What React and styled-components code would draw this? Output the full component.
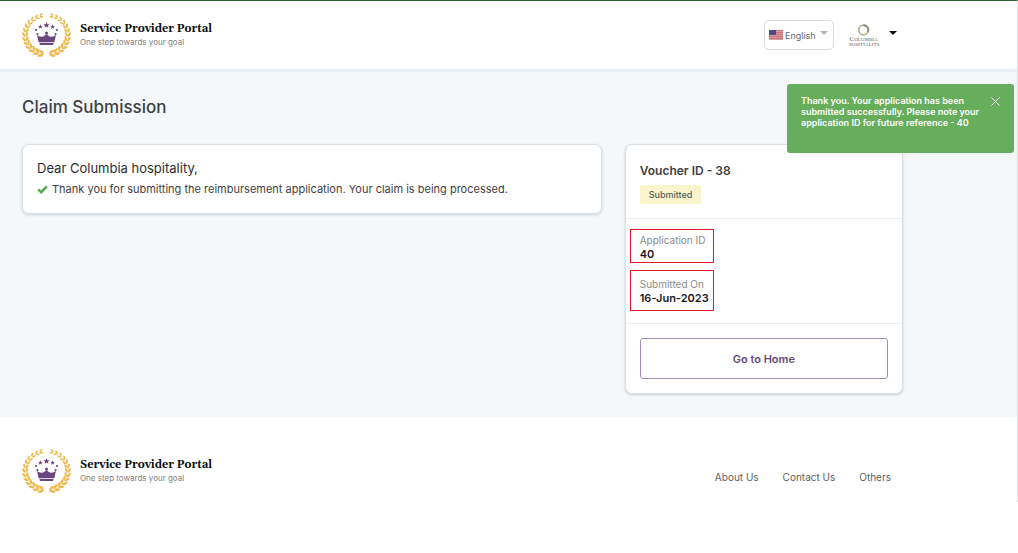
import React, { useState } from "react";
import styled, { createGlobalStyle } from "styled-components";

const GlobalStyle = createGlobalStyle`
  * {
    box-sizing: border-box;
  }
  body {
    margin: 0;
    background: #fff;
    color: #3f4144;
    font-family: Inter, sans-serif;
  }
  h1, h2, p, dl, dd {
    margin: 0;
  }
  button, select {
    font-family: inherit;
    cursor: pointer;
  }
`;

const Page = styled.div`
  border-top: 1px solid #2a6230;
  border-right: 1px solid #dfe2e5;
`;

const Container = styled.div`
  max-width: 903px;
  padding-left: 22px;
`;

const Header = styled.header`
  background: #fff;
  padding: 11px 0;
`;

const HeaderRow = styled(Container)`
  display: flex;
  align-items: center;
  justify-content: space-between;
`;

const HeaderTools = styled.div`
  display: flex;
  align-items: center;
  gap: 15px;
  padding-right: 6px;
`;

const BrandLink = styled.a`
  display: flex;
  align-items: center;
  gap: 9px;
  color: #0c0c0c;
  text-decoration: none;
`;

const BrandName = styled.div`
  font-family: Gelasio, Georgia, "Liberation Serif", serif;
  font-size: 11px;
  font-weight: 700;
  line-height: 14px;
`;

const BrandTagline = styled.div`
  color: #808080;
  font-size: 8px;
  line-height: 12px;
`;

const Language = styled.label`
  display: flex;
  align-items: center;
  gap: 2px;
  width: 70px;
  height: 30px;
  padding: 0 5px 0 4px;
  border: 1px solid #d9dadc;
  border-radius: 5px;
`;

const LanguageSelect = styled.select`
  flex: 1;
  min-width: 0;
  padding: 2px 0 0;
  border: 0;
  background: none;
  appearance: none;
  color: #66686c;
  font-size: 9px;
  line-height: 12px;
`;

const Account = styled.button`
  display: flex;
  align-items: center;
  gap: 10px;
  padding: 0;
  border: 0;
  background: none;
`;

const Caret = styled.span`
  margin-bottom: 4px;
  border: solid transparent;
  border-width: 4px 4px 0;
  border-top-color: ${(props) => props.$color};
`;

const Main = styled.main`
  background: #f4f8fb;
  border-top: 3px solid #ebeff2;
  padding: 23px 0;
`;

const Title = styled.h1`
  font-size: 17px;
  font-weight: 500;
  line-height: 24px;
  margin-bottom: 25px;
`;

const Columns = styled.div`
  display: grid;
  grid-template-columns: 25fr 12fr;
  align-items: start;
  gap: 23px;
`;

const Card = styled.section`
  background: #fff;
  border: 1px solid #dbe0e4;
  border-radius: 7px;
  box-shadow: 0 1px 3px rgba(60, 70, 80, 0.22);
`;

const Message = styled(Card)`
  padding: 12px 14px 14px;
`;

const Greeting = styled.h2`
  color: #2c2e30;
  font-size: 13px;
  font-weight: 400;
  line-height: 22px;
`;

const Note = styled.p`
  display: flex;
  align-items: center;
  gap: 4px;
  font-size: 11px;
  line-height: 20px;
`;

const VoucherHead = styled.div`
  padding: 15px 14px 14px;
`;

const VoucherTitle = styled.h2`
  font-size: 12px;
  font-weight: 600;
  line-height: 22px;
`;

const Status = styled.span`
  display: inline-block;
  padding: 0 9px;
  border-radius: 3px;
  background: #faf5cd;
  color: #566058;
  font-size: 9px;
  font-weight: 500;
  line-height: 19px;
`;

const Details = styled.dl`
  display: grid;
  grid-template-columns: max-content;
  gap: 7px;
  padding: 10px 4px 12px;
  border: solid #ecedef;
  border-width: 1px 0;
`;

const Detail = styled.div`
  padding: ${(props) => (props.$roomy ? "6px 4px 4px 9px" : "3px 4px 0 9px")};
  border: 1px solid #e11b26;
`;

const DetailLabel = styled.dt`
  color: #8a8a8a;
  font-size: 10px;
  line-height: 14px;
`;

const DetailValue = styled.dd`
  color: #17191b;
  font-size: 11px;
  font-weight: 600;
  line-height: 15px;
`;

const VoucherAction = styled.div`
  padding: 14px;
`;

const HomeButton = styled.button`
  width: 100%;
  height: 41px;
  border: 1px solid #a78db3;
  border-radius: 3px;
  background: #fff;
  color: #694878;
  font-size: 11px;
  font-weight: 600;
`;

const Footer = styled.footer`
  padding: 31px 0 8px;
`;

const FooterRow = styled(HeaderRow)`
  align-items: flex-end;
`;

const FooterNav = styled.nav`
  display: flex;
  gap: 24px;
  padding: 0 12px 10px 0;
`;

const FooterLink = styled.a`
  color: #5d5f62;
  font-size: 10px;
  line-height: 14px;
  text-decoration: none;
`;

const Toast = styled.div`
  position: fixed;
  top: 84px;
  right: 4px;
  display: flex;
  align-items: flex-start;
  justify-content: space-between;
  width: 227px;
  min-height: 69px;
  padding: 11px 14px;
  border-radius: 3px;
  background: #66ae5b;
  color: #fff;
  font-size: 9px;
  font-weight: 600;
  line-height: 11px;
`;

const ToastText = styled.p`
  width: 184px;
`;

const CloseButton = styled.button`
  display: flex;
  margin-top: 2px;
  padding: 0;
  border: 0;
  background: none;
`;

const LEAVES = [0, 1, 2, 3, 4, 5, 6, 7, 8, 9, 10, 11, 12];

// one branch of the wreath, growing from the bottom to the top
function Branch() {
  return LEAVES.map((i) => {
    const deg = 104 + i * 12.6;
    const rad = (deg * Math.PI) / 180;
    const x = 24.5 + 21.3 * Math.cos(rad);
    const y = 22.7 + 19.6 * Math.sin(rad);
    const size = 1.3 - i * 0.04;
    return (
      <g key={i} transform={`translate(${x} ${y}) rotate(${deg + 90}) scale(${size})`}>
        <path d="M-1.9 0C-1.7-2 .2-3.1 2.6-2.7C2.1-.9.6.1-1.9 0Z" />
        <path d="M-1.9 0C-1.7 2 .2 3.1 2.6 2.7C2.1.9.6-.1-1.9 0Z" />
      </g>
    );
  });
}

const STAR = "M0-3.2L.9-1L3.1-.9L1.4.5L2 2.6L0 1.4L-2 2.6L-1.4.5L-3.1-.9L-.9-1Z";

function Emblem() {
  return (
    <svg width="49" height="46" viewBox="0 0 49 46" aria-hidden="true">
      <g fill="#ecb94d">
        <Branch />
        <g transform="translate(49 0) scale(-1 1)">
          <Branch />
        </g>
      </g>
      <g fill="#6b457e">
        <path d={STAR} transform="translate(24.5 13.2)" />
        <path d={STAR} transform="translate(18.4 14.7) scale(.75)" />
        <path d={STAR} transform="translate(30.6 14.7) scale(.75)" />
        <circle cx="14" cy="18" r="1.1" />
        <circle cx="35" cy="18" r="1.1" />
        <circle cx="15.4" cy="22" r="1.1" />
        <circle cx="33.6" cy="22" r="1.1" />
        <circle cx="24.5" cy="21" r="1.5" />
        <path d="M15 22.5C17 25 20.5 25.5 22.8 23.5L24.5 22L26.2 23.5C28.5 25.5 32 25 34 22.5L32.4 30.2H16.6Z" />
        <path d="M17.4 31H31.6L31 33H18Z" />
      </g>
    </svg>
  );
}

function Brand() {
  return (
    <BrandLink href="#">
      <Emblem />
      <div>
        <BrandName>Service Provider Portal</BrandName>
        <BrandTagline>One step towards your goal</BrandTagline>
      </div>
    </BrandLink>
  );
}

function Flag() {
  return (
    <svg width="14" height="10" viewBox="0 0 14 10" aria-hidden="true">
      <path fill="#d9a0a3" d="M0 0h14v10H0z" />
      <path fill="#c66f76" d="M0 0h14v1H0zM0 2h14v1H0zM0 4h14v1H0zM0 6h14v1H0zM0 8h14v1H0z" />
      <path fill="#4c4a8c" d="M0 0h7v5H0z" />
    </svg>
  );
}

function ColumbiaLogo() {
  return (
    <svg width="30" height="23" viewBox="0 0 30 23" aria-hidden="true">
      <circle cx="14.5" cy="6" r="4.8" fill="none" stroke="#b0b48f" strokeWidth="1.7" />
      <path d="M14.5 1.2A4.8 4.8 0 0 1 18.9 8" fill="none" stroke="#7c857a" strokeWidth="1.7" />
      <g fill="#5f6259" fontFamily="Liberation Serif, serif" textAnchor="middle">
        <text x="14.5" y="17" fontSize="7">
          C<tspan fontSize="5">OLUMBIA</tspan>
        </text>
        <text x="15" y="22" fontSize="5">
          HOSPITALITY
        </text>
      </g>
    </svg>
  );
}

function App() {
  const [showToast, setShowToast] = useState(true);

  return (
    <>
      <GlobalStyle />
      <Page>
        <Header>
          <HeaderRow>
            <Brand />
            <HeaderTools>
              <Language>
                <Flag />
                <LanguageSelect aria-label="Language">
                  <option>English</option>
                </LanguageSelect>
                <Caret $color="#b3b3b3" />
              </Language>
              <Account type="button" aria-label="Columbia Hospitality account">
                <ColumbiaLogo />
                <Caret $color="#111" />
              </Account>
            </HeaderTools>
          </HeaderRow>
        </Header>

        <Main>
          <Container>
            <Title>Claim Submission</Title>
            <Columns>
              <Message>
                <Greeting>Dear Columbia hospitality,</Greeting>
                <Note>
                  <svg width="11" height="9" viewBox="0 0 11 9" aria-hidden="true">
                    <path d="M1.2 4.4L4.1 7.2L9.8 1.5" fill="none" stroke="#55a84f" strokeWidth="2.5" />
                  </svg>
                  Thank you for submitting the reimbursement application. Your claim is being processed.
                </Note>
              </Message>

              <Card>
                <VoucherHead>
                  <VoucherTitle>Voucher ID - 38</VoucherTitle>
                  <Status>Submitted</Status>
                </VoucherHead>
                <Details>
                  <Detail>
                    <DetailLabel>Application ID</DetailLabel>
                    <DetailValue>40</DetailValue>
                  </Detail>
                  <Detail $roomy>
                    <DetailLabel>Submitted On</DetailLabel>
                    <DetailValue>16-Jun-2023</DetailValue>
                  </Detail>
                </Details>
                <VoucherAction>
                  <HomeButton type="button">Go to Home</HomeButton>
                </VoucherAction>
              </Card>
            </Columns>
          </Container>
        </Main>

        <Footer>
          <FooterRow>
            <Brand />
            <FooterNav>
              <FooterLink href="#">About Us</FooterLink>
              <FooterLink href="#">Contact Us</FooterLink>
              <FooterLink href="#">Others</FooterLink>
            </FooterNav>
          </FooterRow>
        </Footer>
      </Page>

      {showToast && (
        <Toast role="status">
          <ToastText>
            Thank you. Your application has been submitted successfully. Please note your application ID for future
            reference - 40
          </ToastText>
          <CloseButton type="button" aria-label="Close" onClick={() => setShowToast(false)}>
            <svg width="9" height="9" viewBox="0 0 9 9">
              <path d="M.5.5L8.5 8.5M8.5.5L.5 8.5" stroke="#fff" />
            </svg>
          </CloseButton>
        </Toast>
      )}
    </>
  );
}

export default App;
